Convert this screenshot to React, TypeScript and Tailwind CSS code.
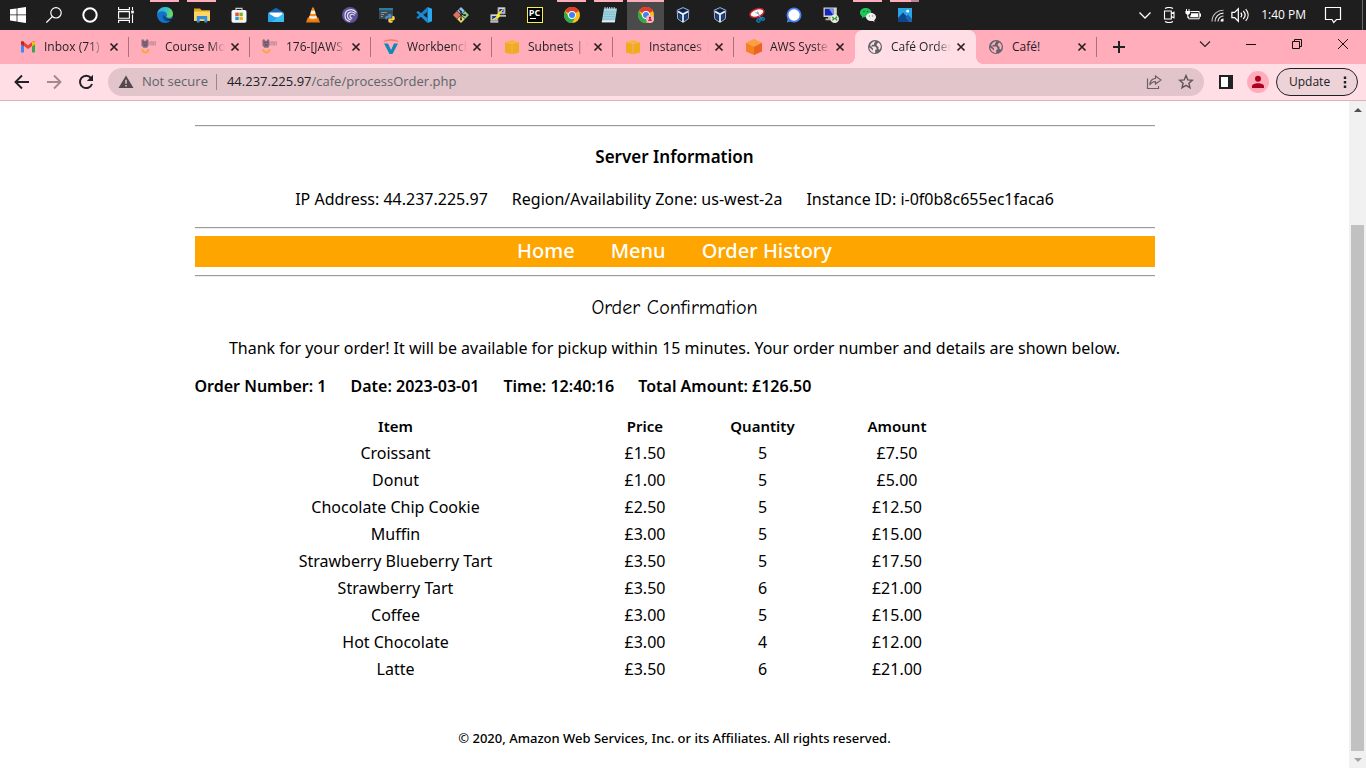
import React from "react";

type IconProps = { children: React.ReactNode; size?: string; box?: string };

function Svg({ children, size = "size-4", box = "0 0 16 16" }: IconProps) {
  return (
    <svg viewBox={box} className={`${size} shrink-0`} fill="none" aria-hidden="true">
      {children}
    </svg>
  );
}

/* ---------- Taskbar icons ---------- */

const Windows = () => (
  <Svg>
    <path fill="#fff" d="M0 2.3 6.6 1.4v6.1H0zM7.4 1.3 16 0v7.5H7.4zM0 8.3h6.6v6.2L0 13.6zM7.4 8.3H16V16l-8.6-1.3z" />
  </Svg>
);
const Search = () => (
  <Svg>
    <circle cx="10" cy="5.8" r="5.2" stroke="#fff" strokeWidth="1.2" />
    <path d="M6.3 9.6.3 15.6" stroke="#fff" strokeWidth="1.3" />
  </Svg>
);
const Cortana = () => (
  <Svg>
    <circle cx="8" cy="8" r="6.7" stroke="#fff" strokeWidth="2" />
  </Svg>
);
const TaskView = () => (
  <Svg>
    <path d="M.6 0v2.6h10.8V0M.6 16v-2.6h10.8V16M.6 4.6h10.8v6.6H.6zM14.5 0v3M14.5 7.5V16" stroke="#fff" strokeWidth="1.1" />
    <path d="M13.2 3.6h2.6v2.8h-2.6z" fill="#fff" />
  </Svg>
);
const Edge = () => (
  <Svg>
    <defs>
      <linearGradient id="edgeTop" x1="0" y1="0" x2="1" y2="0.4">
        <stop offset="0" stopColor="#2ba7e0" />
        <stop offset="0.6" stopColor="#35c1c8" />
        <stop offset="1" stopColor="#6bdc5a" />
      </linearGradient>
    </defs>
    <circle cx="8" cy="8" r="8" fill="#1671c9" />
    <path d="M.1 7.2C.8 2.8 4.2 0 8.2 0 12.800 0 16 3.200 16 6.700c0 2.400-1.800 4-4.200 4-1.600 0-2.600-.6-2.400-1.200.8-.8.8-1.600.6-2.300C9.500 5.400 7.800 4.300 5.600 4.300 3 4.300.8 5.500.1 7.200z" fill="url(#edgeTop)" />
    <path d="M6 7.500c-1.400 3.600 1.600 7.500 6.600 6.900 1-.2 1.800-.7 2.200-1.100-2.400.7-6.500-.4-6-3.800C7.500 9.300 6.300 8.500 6 7.500z" fill="#0c4a97" />
    <path d="M9.400 9.500c-.5 2.400 2.900 3.600 6 2.100l.6 1.200-1.200.6c-2.600.9-6.400-.6-5.400-3.900z" fill="#1e1e1e" />
  </Svg>
);
const Explorer = () => (
  <Svg>
    <path d="M0 1.500h6l1.500 1.700H16V14H0z" fill="#e8a820" />
    <path d="M0 4.500h16v9.300H0z" fill="#fcd667" />
    <path d="M2.800 9h10.400v6.600h-2.800v-3.400H5.600v3.400H2.800z" fill="#2f8fdc" />
  </Svg>
);
const Store = () => (
  <Svg>
    <path d="M5 3.500V1.400h6v2.100" stroke="#c9cdd2" strokeWidth="1.200" />
    <rect x=".5" y="3" width="15" height="12.800" rx="1.800" fill="#f4f6f8" />
    <path d="M4.300 5.600h3.400V9H4.300z" fill="#e9502a" />
    <path d="M8.400 5.600h3.400V9H8.400z" fill="#7cb52b" />
    <path d="M4.300 9.700h3.400v3.400H4.300z" fill="#1f9be0" />
    <path d="M8.400 9.700h3.400v3.400H8.400z" fill="#f6b50e" />
  </Svg>
);
const Mail = () => (
  <Svg>
    <path d="M0 5.800 8 .800l8 5V15H0z" fill="#1566b3" />
    <path d="M1.500 5.500h13v5h-13z" fill="#fff" />
    <path d="M0 6v9h16L8 10.700z" fill="#28a4ea" />
    <path d="M16 6v9H3.500z" fill="#3cbcf5" />
  </Svg>
);
const Vlc = () => (
  <Svg>
    <path d="m2.700 10.500-1.700 5h14l-1.700-5z" fill="#e87a10" />
    <path d="M7.200.5h1.600l3.700 12c-2 1.300-7 1.300-9 0z" fill="#f58a18" />
    <path d="m6.300 3.500-.9 2.900c1.600.7 3.600.7 5.200 0l-.9-2.900c-1 .4-2.400.4-3.400 0zM4.700 8.700l-.7 2.200c2.300 1.100 5.700 1.100 8 0l-.7-2.200c-1.900.8-4.700.8-6.600 0z" fill="#f3efe9" />
  </Svg>
);
const Torrent = () => (
  <Svg>
    <circle cx="8" cy="8" r="8" fill="#5d5298" />
    <path d="M14.500 5.500C11 1 3 2 3 8.500c0 3 2 5.500 5 6M13.500 7C11 3.800 5.500 4.500 5.500 8.700c0 2 1.500 3.800 3.800 4.300M12.500 8.500c-1.300-2-4.500-1.400-4.500.5 0 1.300 1 2.200 2.300 2.400" stroke="#e3e0f3" strokeWidth="1.200" />
  </Svg>
);
const PyIdle = () => (
  <Svg>
    <path d="M0 1h14v11H0z" fill="#3b4a54" />
    <path d="M0 1h14v2.200H0z" fill="#2c7aa8" />
    <path d="M2 5.500h6M2 7.500h3M2 9.500h2" stroke="#8395a0" />
    <path d="M8.500 8.500c0-1.300.8-1.600 2-1.600s2 .4 2 1.500v2.400H9.400c-1 0-1.500.7-1.500 1.800-1.200 0-1.700-.6-1.700-1.900s.6-1.800 1.700-1.800h2.600" fill="#4a8ac4" />
    <path d="M13.300 8.800c1.700 0 2.500.8 2.500 2.400s-.8 2.200-1.900 2.200h-2.200v.5h2.100c0 1.300-.8 1.900-2.200 1.900s-2.300-.6-2.300-1.800v-1.200c0-.8.500-1.300 1.300-1.300h1.800c.6 0 .9-.4.9-1z" fill="#f8d24a" />
  </Svg>
);
const VsCode = () => (
  <Svg>
    <path d="m11.500 0 4.500 1.800v12.400L11.500 16z" fill="#29a8f0" />
    <path d="M11.500 0v4.700L2.200 12 .2 10.700z" fill="#1583cf" />
    <path d="M11.500 16v-4.700L2.200 4 .2 5.300z" fill="#1b8edb" />
  </Svg>
);
const Git = () => (
  <Svg>
    <path d="m8 0 3.800 3.800L8 7.600 4.200 3.800z" fill="#8ec3f0" />
    <path d="M3.900 4.100 7.800 8l-3.900 3.900L0 8z" fill="#e0705f" />
    <path d="M12.100 4.100 16 8l-3.900 3.900L8.200 8z" fill="#86cc84" />
    <path d="m8 8.400 3.800 3.800L8 16l-3.800-3.800z" fill="#f3d776" />
    <path d="M6 2.500 8 5v8M8 6.500l3.500 2" stroke="#222" strokeWidth="1.100" />
    <path d="M7.100 3.800h1.800v1.800H7.100zM7.100 11.500h1.800v1.800H7.100zM11 7.300h1.800v1.800H11z" fill="#222" />
  </Svg>
);
const Putty = () => (
  <Svg>
    <path d="M8 .5h7v6.300H8zM.8 7.500h7v6.300h-7z" fill="#d6d6d6" stroke="#999" />
    <path d="M9.400 2h4.200v3.300H9.400zM2.200 9h4.200v3.300H2.200z" fill="#1b33a8" />
    <path d="M8 8h8v1.800H8zM.3 14h8v1.800h-8z" fill="#b8b8b8" />
    <path d="M13 2.500 7.500 7v2.300L3 12.500 9.300 10V7.300z" fill="#ffee22" stroke="#ffee22" strokeWidth=".8" />
  </Svg>
);
const PyCharm = () => (
  <span className="flex size-4 flex-col items-center border border-[#f5f04a] bg-black font-['Open_Sans',sans-serif] text-[9px] leading-[9px] font-bold text-white">
    PC
    <span className="mt-px mr-1 h-px w-1.5 bg-white" />
  </span>
);
const Chrome = ({ badge = false }: { badge?: boolean }) => (
  <Svg>
    <circle cx="8" cy="8" r="8" fill="#fbc116" />
    <path d="M8 8 1.070 4A8 8 0 0 1 14.930 4z" fill="#e33b2e" />
    <path d="M8 0a8 8 0 0 1 6.930 4H8z" fill="#e33b2e" />
    <path d="M1.070 4A8 8 0 0 0 8 16l3.460-6L8 8l-3.500 2z" fill="#2da94f" />
    <circle cx="8" cy="8" r="3.900" fill="#fff" />
    <circle cx="8" cy="8" r="3" fill="#3f83f1" />
    {badge && (
      <>
        <circle cx="12" cy="12" r="4" fill="#ffb3c0" />
        <circle cx="12" cy="10.800" r="1.100" fill="#b00020" />
        <path d="M10 13.700c0-2 4-2 4 0z" fill="#b00020" />
      </>
    )}
  </Svg>
);
const Notepad = () => (
  <Svg>
    <path d="M3 1.500h13l-2.200 13.700H.8z" fill="#9fd5e2" />
    <path d="M.8 15.200h13l.3-1.700H1z" fill="#e9eef0" />
    <path d="M3.300 5h11M3 7.300h11M2.600 9.600h11M2.300 12h11" stroke="#78b4c4" strokeWidth=".7" />
    <path d="M4 0v2.500M6.300 0v2.500M8.600 0v2.500M10.900 0v2.500M13.200 0v2.500" stroke="#d6dde0" strokeWidth=".9" />
  </Svg>
);
const VBox = () => (
  <Svg>
    <path d="m8 .6 5.800 2.600-.5 8.600L8 15.500l-5.300-3.700-.5-8.600z" fill="#16325f" stroke="#9fb4d2" />
    <path d="M8 1.800 11.500 3.200 8 4.800 4.500 3.200z" fill="#0d1d38" />
    <path d="M3 4.500 8 7.300l5-2.800M8 7.500V15" stroke="#f0f5fc" strokeWidth="1.700" />
    <path d="m4 7.300 2.300 1.300v3.400L4.500 10.700zM12 7.300 9.700 8.600v3.400l1.800-1.300z" fill="#1f4a8a" />
  </Svg>
);
const Snip = () => (
  <Svg>
    <ellipse cx="8" cy="6" rx="7.200" ry="4" fill="#fafafa" stroke="#c8232b" strokeWidth="1.500" transform="rotate(-18 8 6)" />
    <path d="M6.500 5.500 9 6.500M8.500 4.500l3.500 8" stroke="#8b99a8" />
    <circle cx="9.500" cy="13.500" r="1.600" stroke="#1581c4" strokeWidth="1.400" />
    <circle cx="13.900" cy="12" r="1.400" stroke="#1581c4" strokeWidth="1.400" />
    <path d="m10.500 12 3.500-2" stroke="#1581c4" strokeWidth="1.400" />
  </Svg>
);
const Signal = () => (
  <Svg>
    <circle cx="8" cy="8" r="7.500" fill="#4a7ff0" />
    <path d="m.8 15.500 1-4 3 3z" fill="#4a7ff0" />
    <circle cx="8" cy="8" r="5.700" fill="#fff" />
  </Svg>
);
const Remote = () => (
  <Svg>
    <path d="M.5.500h13.300V10H.5z" fill="#d9d5c8" />
    <path d="M1.800 1.700h8.700v6.800H1.800z" fill="#1228b8" />
    <path d="M6 1.700h4.500v6.800z" fill="#7d93ee" />
    <path d="M5 10h4v1.600H5zM2.500 11.600h7v1.600h-7z" fill="#b9b5a8" />
    <circle cx="11.700" cy="11.700" r="4.300" fill="#e8e8e0" />
    <path d="m9.300 10 1.800 1.700-1.800 1.700M14.100 9.800l-1.800 1.700 1.800 1.700" stroke="#2a9a30" strokeWidth="1.300" />
  </Svg>
);
const WeChat = () => (
  <Svg>
    <path d="M5.700 1c3.200 0 5.700 2 5.700 4.700S9 10.300 5.700 10.300c-.6 0-1.200-.1-1.700-.2L1.700 11.200l.5-1.900C.8 8.500 0 7.200 0 5.700 0 3 2.500 1 5.700 1z" fill="#1fc65b" />
    <path d="M11 6c2.800 0 5 1.800 5 4.100 0 1.300-.7 2.400-1.800 3.100l.4 1.600-1.900-.9c-.5.200-1.100.2-1.700.2-2.800 0-5-1.700-5-4S8.200 6 11 6z" fill="#f0f0f0" />
    <circle cx="4" cy="4.500" r=".8" fill="#0d6b2d" />
    <circle cx="7.500" cy="4.500" r=".8" fill="#0d6b2d" />
    <circle cx="9.400" cy="9" r=".7" fill="#888" />
    <circle cx="12.700" cy="9" r=".7" fill="#888" />
  </Svg>
);
const Photos = () => (
  <Svg>
    <path d="M1 1h14v14H1z" fill="#2ba3e8" />
    <path d="m1 11 5-5.500L15 15H1z" fill="#0f4788" />
    <path d="m8.500 10.500 2.500-3 4 4.500v3h-3z" fill="#1b64b0" />
    <circle cx="10.700" cy="4.200" r="1.400" fill="#fff" />
  </Svg>
);

const pinned: { name: string; icon: React.ReactNode; mark?: "on" | "active" | "group" }[] = [
  { name: "Microsoft Edge", icon: <Edge />, mark: "on" },
  { name: "File Explorer", icon: <Explorer />, mark: "on" },
  { name: "Microsoft Store", icon: <Store /> },
  { name: "Mail", icon: <Mail /> },
  { name: "VLC", icon: <Vlc /> },
  { name: "BitTorrent", icon: <Torrent /> },
  { name: "Python IDLE", icon: <PyIdle /> },
  { name: "Visual Studio Code", icon: <VsCode /> },
  { name: "Git Bash", icon: <Git /> },
  { name: "PuTTY", icon: <Putty /> },
  { name: "PyCharm", icon: <PyCharm /> },
  { name: "Chrome", icon: <Chrome />, mark: "on" },
  { name: "Notepad", icon: <Notepad />, mark: "on" },
  { name: "Chrome profile", icon: <Chrome badge />, mark: "active" },
  { name: "VirtualBox", icon: <VBox /> },
  { name: "VirtualBox Manager", icon: <VBox /> },
  { name: "Snipping Tool", icon: <Snip /> },
  { name: "Signal", icon: <Signal /> },
  { name: "Remote Desktop", icon: <Remote /> },
  { name: "WeChat", icon: <WeChat />, mark: "on" },
  { name: "Photos", icon: <Photos />, mark: "group" },
];

const system = [
  { name: "Start", icon: <Windows /> },
  { name: "Search", icon: <Search /> },
  { name: "Cortana", icon: <Cortana /> },
  { name: "Task View", icon: <TaskView /> },
];

function Taskbar() {
  return (
    <div className="flex h-[30px] items-stretch bg-[#1e1e1e] text-white">
      <div className="mr-0.5 flex">
        {system.map((s) => (
          <button key={s.name} aria-label={s.name} className="flex w-9 items-center justify-center">
            {s.icon}
          </button>
        ))}
      </div>
      <div className="flex">
        {pinned.map((p) => (
          <button
            key={p.name}
            aria-label={p.name}
            className={`relative flex w-[37px] items-center justify-center ${p.mark === "active" ? "bg-[#4a4a4a]" : ""}`}
          >
            {p.mark === "active" && <span className="absolute inset-x-0 top-0 h-0.5 bg-[#ffacbb]" />}
            {p.mark === "on" && <span className="absolute inset-x-1 top-0 h-0.5 bg-[#ffacbb]" />}
            {p.mark === "group" && (
              <span className="absolute inset-x-1 top-0 h-0.5 border-r-8 border-[#b98690] bg-[#ffacbb]" />
            )}
            {p.icon}
          </button>
        ))}
      </div>
      <div className="ml-auto flex items-center">
        <button aria-label="Hidden icons" className="flex w-6 justify-center">
          <Svg><path d="m2.500 5.500 5.500 5.500 5.500-5.500" stroke="#fff" strokeWidth="1.300" /></Svg>
        </button>
        <button aria-label="Meet now" className="flex w-6 justify-center">
          <Svg>
            <path d="M4 1.500c2.500-1.300 5.500-1.300 8 0M4 14.500c2.500 1.300 5.500 1.300 8 0M3.500 4h6.800v8H3.500zM10.300 6.500l2.700-1.300v5.600l-2.700-1.300" stroke="#fff" strokeWidth="1.100" />
          </Svg>
        </button>
        <button aria-label="Battery" className="flex w-6 justify-center">
          <Svg>
            <path d="M5.500 4.500h8.700v7.300H3.700V9.500" stroke="#fff" />
            <path d="M6 6.300h7v4H5.300V8.500L6 7.700zM14.700 6.500H16v3.300h-1.300z" fill="#fff" />
            <path d="M1.500 2v2M4 2v2" stroke="#fff" />
            <path d="M.4 4h4.700v2.300L3.400 7.700H2.100L.4 6.300z" fill="#fff" />
            <path d="M2.800 7v4" stroke="#fff" />
          </Svg>
        </button>
        <button aria-label="Network" className="flex w-6 justify-center">
          <Svg>
            <path d="M3 14.500C3 8 8 3.200 14.500 3.200" stroke="#bbb" strokeWidth="1.100" />
            <path d="M6 14.500c0-4.700 3.800-8.400 8.500-8.400M9 14.500c0-3 2.500-5.500 5.500-5.500" stroke="#eee" strokeWidth="1.100" />
            <path d="M11.500 14.500c0-1.700 1.300-3 3-3v3z" fill="#fff" />
          </Svg>
        </button>
        <button aria-label="Volume" className="flex w-[22px] justify-center">
          <Svg size="size-[18px]">
            <path d="M.8 5.700h2.400L6.500 2.500v11L3.200 10.300H.8zM8.700 6c1 1.200 1 2.800 0 4M10.900 4.300c2 2.200 2 5.200 0 7.400M13.100 2.700c2.800 3.200 2.800 7.400 0 10.600" stroke="#fff" strokeWidth="1.100" />
          </Svg>
        </button>
        <time className="ml-2.5 font-['Open_Sans',sans-serif] text-xs">1:40 PM</time>
        <button aria-label="Notifications" className="ml-[17px] flex w-5 justify-center">
          <Svg size="size-[18px]" box="0 0 18 18">
            <path d="M1.500 1.500h15v12h-4L9.700 16.500 8 13.500H1.500z" stroke="#fff" strokeWidth="1.200" />
          </Svg>
        </button>
        <span className="mr-[3px] ml-[19px] h-[30px] w-px bg-[#6a6a6a]" />
      </div>
    </div>
  );
}

/* ---------- Tab icons ---------- */

const Gmail = () => (
  <Svg>
    <path d="M1 4v9.500h3V6.800L1.500 4.500z" fill="#4285f4" />
    <path d="M15 4v9.500h-3V6.800L14.500 4.500z" fill="#34a853" />
    <path d="M1 3.600C1 2.200 2.600 2 3.500 2.700L8 6.200v3.700L1 4.700z" fill="#ea4335" />
    <path d="M15 3.600c0-1.400-1.600-1.600-2.500-.9L8 6.200v3.700l4-3z" fill="#ea4335" />
    <path d="M12 3.100c1-1 3-.8 3 .8v1.300l-3 2.200z" fill="#fbbc04" />
    <path d="M1 3.700c0-1.600 2-1.800 3-.7v4L1 4.900z" fill="#c5221f" />
  </Svg>
);
const Canvas = () => (
  <Svg>
    <path d="M.5 1 2 0l1.200 1.800h1.600L6 0l1.300 1 .4 4.800L6.200 8.800H2.500L.5 6.500z" fill="#85697c" />
    <path d="M2.200 3.500h1.300M4.800 3.500h1.300M2.800 6h2.700" stroke="#57445a" />
    <path d="M9 2.500v4M9.500 3h1.500v3.500M12.500 2.500V6.500M14.300 2v4.500" stroke="#c78e9c" strokeWidth="1.300" />
    <path d="M1.200 10c.3 4.500 6 4.500 6.300 0" stroke="#fba63e" strokeWidth="2" />
  </Svg>
);
const Vocareum = () => (
  <Svg>
    <path d="M.8 2.500C4.500.5 11.500.5 15.200 2.500" stroke="#f4785a" strokeWidth="1.400" />
    <path d="M1 4.500h4L8 11l3-6.500h4L9.500 15h-3z" fill="#1089b8" />
  </Svg>
);
const YellowCube = () => (
  <Svg>
    <path d="M1.500 2.700 8 1.200l6.500 1.500L8 4.200z" fill="#f7b929" />
    <path d="M1 3.300 7.700 4.800v10.500L1 13.500zM15 3.300 8.300 4.800v10.500l6.700-1.800z" fill="#f0ac1c" />
  </Svg>
);
const OrangeCube = () => (
  <Svg>
    <path d="m8 0 8 3.700-8 4-8-4z" fill="#f9a13a" />
    <path d="m0 3.700 8 4V16l-8-3.600z" fill="#f58220" />
    <path d="m16 3.700-8 4V16l8-3.600z" fill="#ec6420" />
  </Svg>
);
const Globe = ({ hole }: { hole: string }) => (
  <Svg>
    <circle cx="8" cy="8" r="7" fill="#5f6368" />
    <path d="M8.500 2.200 7 4.500v1.300H5.200L4 7.500h4.200L9.500 9v1.800H8.200V14C5 14 2.300 11.500 2.300 8.200L6 11.500v-2L3 6.500C4 4 6 2.200 8.500 2.200zM11.500 3.500C13 4.500 13.800 6.300 13.800 8l-1 2.800-1.300-.8V8L9.700 6.500V5z" fill={hole} />
  </Svg>
);

const tabs = [
  { title: "Inbox (71)", icon: <Gmail /> },
  { title: "Course Mo", icon: <Canvas /> },
  { title: "176-[JAWS", icon: <Canvas /> },
  { title: "Workbench", icon: <Vocareum /> },
  { title: "Subnets | V", icon: <YellowCube /> },
  { title: "Instances |", icon: <YellowCube /> },
  { title: "AWS Syste", icon: <OrangeCube /> },
  { title: "Café Order", icon: <Globe hole="#ffdfe5" /> },
  { title: "Café!", icon: <Globe hole="#ffacbb" /> },
];
const ACTIVE = 7;

function TabStrip() {
  return (
    <div className="flex h-[34px] bg-[#ffacbb] pl-2 text-[#1f2023]">
      {tabs.map((t, i) => {
        const active = i === ACTIVE;
        return (
          <div
            key={t.title}
            className={`relative flex w-[121px] items-center pl-3 ${active ? "rounded-t-lg bg-[#ffdfe5]" : ""}`}
          >
            {active && (
              <>
                <span className="absolute bottom-0 -left-2 size-2 bg-[radial-gradient(circle_at_0_0,transparent_8px,#ffdfe5_8px)]" />
                <span className="absolute -right-2 bottom-0 size-2 bg-[radial-gradient(circle_at_100%_0,transparent_8px,#ffdfe5_8px)]" />
              </>
            )}
            {t.icon}
            <span className={`ml-2 w-[60px] text-xs whitespace-nowrap ${i < 8 ? "mask-r-from-75%" : ""}`}>{t.title}</span>
            <button aria-label={`Close ${t.title}`} className="ml-0.5">
              <Svg><path d="m4.500 4.500 7 7m0-7-7 7" stroke="#2a2023" strokeWidth="1.700" /></Svg>
            </button>
            {!active && i !== ACTIVE - 1 && <span className="ml-auto h-5 w-px bg-[#a8717c]" />}
          </div>
        );
      })}
      <button aria-label="New tab" className="ml-3.5 flex items-center">
        <Svg><path d="M8 2v12M2 8h12" stroke="#202124" strokeWidth="2" /></Svg>
      </button>
      <div className="ml-auto flex h-7">
        <button aria-label="Search tabs" className="flex w-[46px] items-center justify-center">
          <Svg><path d="m3 5.500 5 5 5-5" stroke="#222" strokeWidth="1.100" /></Svg>
        </button>
        <button aria-label="Minimize" className="flex w-[46px] items-center justify-center">
          <Svg><path d="M3 8.500h10" stroke="#111" /></Svg>
        </button>
        <button aria-label="Restore" className="flex w-[46px] items-center justify-center">
          <Svg><path d="M3.500 5.500h7v7h-7zM5.500 5.500v-2h7v7h-2" stroke="#111" /></Svg>
        </button>
        <button aria-label="Close window" className="flex w-[46px] items-center justify-center">
          <Svg><path d="m3 3 10 10M13 3 3 13" stroke="#111" /></Svg>
        </button>
      </div>
    </div>
  );
}

function Toolbar() {
  return (
    <div className="flex h-[37px] items-center border-b border-[#d5b6bd] bg-[#ffdfe5] pr-2 pl-3.5 text-[#202124]">
      <div className="flex gap-4">
        <button aria-label="Back"><Svg><path d="M15 8H2M8 1.500 1.500 8 8 14.500" stroke="#202124" strokeWidth="1.900" /></Svg></button>
        <button aria-label="Forward"><Svg><path d="M1 8h13M8 1.500 14.500 8 8 14.500" stroke="#a3898f" strokeWidth="1.900" /></Svg></button>
        <button aria-label="Reload">
          <Svg>
            <path d="M13 4A6.200 6.200 0 1 0 14 10" stroke="#202124" strokeWidth="2" />
            <path d="M15 .8V7H8.800z" fill="#202124" />
          </Svg>
        </button>
      </div>
      <div className="ml-3.5 flex h-7 flex-1 items-center rounded-full bg-[#e1c5ca] px-2.5 font-['Open_Sans',sans-serif] text-[13px] text-[#5f6368]">
        <Svg>
          <path d="M8 1.500 15.500 14H.5z" fill="#54494d" />
          <path d="M8 5.800v4M8 11v1.600" stroke="#e1c5ca" strokeWidth="1.500" />
        </Svg>
        <span className="ml-2">Not secure</span>
        <span className="mr-2.5 ml-2 h-4 w-px bg-[#9b868b]" />
        <div className="relative flex-1">
          <input aria-label="Address" className="w-full bg-transparent text-transparent outline-none" defaultValue="44.237.225.97/cafe/processOrder.php" />
          <span className="pointer-events-none absolute inset-0" aria-hidden="true">
            <span className="text-[#202124]">44.237.225.97</span>/cafe/processOrder.php
          </span>
        </div>
        <button aria-label="Share" className="mr-4">
          <Svg>
            <path d="M1.500 4.500v10h11v-2.500M9.500 2l5.500 4-5.500 4V7.700C6.500 7.700 5 8.800 3.700 11 4 7.500 6 4.800 9.500 4.400z" stroke="#6d6064" strokeWidth="1.200" />
          </Svg>
        </button>
        <button aria-label="Bookmark">
          <Svg><path d="m8 1.600 1.800 4.300 4.600.4-3.500 3 1.100 4.500L8 11.400l-4 2.400 1.100-4.500-3.500-3 4.600-.4z" stroke="#5f5357" strokeWidth="1.400" /></Svg>
        </button>
      </div>
      <button aria-label="Side panel" className="ml-3.5">
        <Svg><path d="M1 1h14v14H1z" fill="#202124" /><path d="M3 3h7v10H3z" fill="#fff" /></Svg>
      </button>
      <button aria-label="Profile" className="ml-[13px] flex size-[22px] items-center justify-center rounded-full bg-[#ffacbb]">
        <Svg><circle cx="8" cy="4.700" r="3" fill="#b00020" /><path d="M2 14v-1.700C2 8.200 14 8.200 14 12.300V14z" fill="#b00020" /></Svg>
      </button>
      <button className="ml-[7px] flex h-7 w-[82px] items-center justify-between rounded-full border border-[#202124] bg-[#edd2d8] pr-1 pl-3 font-['Open_Sans',sans-serif] text-xs">
        Update
        <Svg>
          <path d="M6.800 2.500h2.400v2.400H6.800zM6.800 7h2.400v2.400H6.800zM6.800 11.500h2.400v2.400H6.800z" fill="#202124" />
        </Svg>
      </button>
    </div>
  );
}

const server = ["IP Address: 44.237.225.97", "Region/Availability Zone: us-west-2a", "Instance ID: i-0f0b8c655ec1faca6"];
const summary = ["Order Number: 1", "Date: 2023-03-01", "Time: 12:40:16", "Total Amount: £126.50"];
const rows: [string, string, number, string][] = [
  ["Croissant", "£1.50", 5, "£7.50"],
  ["Donut", "£1.00", 5, "£5.00"],
  ["Chocolate Chip Cookie", "£2.50", 5, "£12.50"],
  ["Muffin", "£3.00", 5, "£15.00"],
  ["Strawberry Blueberry Tart", "£3.50", 5, "£17.50"],
  ["Strawberry Tart", "£3.50", 6, "£21.00"],
  ["Coffee", "£3.00", 5, "£15.00"],
  ["Hot Chocolate", "£3.00", 4, "£12.00"],
  ["Latte", "£3.50", 6, "£21.00"],
];

const Rule = () => <hr className="h-0.5 border-t border-b border-t-[#9a9a9a] border-b-[#eeeeee]" />;

function OrderPage() {
  return (
    <main className="mx-auto w-full max-w-[960px] pt-6 text-center font-['Noto_Sans',sans-serif] text-base leading-6 text-black">
      <Rule />
      <h2 className="mt-[18px] text-[17px] font-semibold">Server Information</h2>
      <p className="mt-[18px] flex justify-center gap-6">
        {server.map((s) => <span key={s}>{s}</span>)}
      </p>
      <div className="mt-4"><Rule /></div>
      <nav className="mt-[7px] mb-2 flex h-[31px] items-center justify-center gap-9 bg-[#ffa500] pb-0.5 text-xl font-medium text-white">
        <a href="#home">Home</a>
        <a href="#menu">Menu</a>
        <a href="#history">Order History</a>
      </nav>
      <Rule />
      <h2 className="mt-[19px] font-['Comic_Sans_MS','Comic_Neue',cursive] text-xl leading-6 font-medium">Order Confirmation</h2>
      <p className="mt-4">
        Thank for your order! It will be available for pickup within 15 minutes. Your order number and details are shown below.
      </p>
      <p className="mt-3.5 flex gap-6 font-semibold">
        {summary.map((s) => <span key={s}>{s}</span>)}
      </p>
      <table className="mt-3.5 w-4/5 table-fixed">
        <colgroup>
          <col className="w-[402px]" />
          <col className="w-[97px]" />
          <col className="w-[138px]" />
          <col />
        </colgroup>
        <thead>
          <tr className="h-[27px] text-[15px]">
            {["Item", "Price", "Quantity", "Amount"].map((h) => <th key={h} className="p-0 font-semibold">{h}</th>)}
          </tr>
        </thead>
        <tbody>
          {rows.map((r) => (
            <tr key={r[0]} className="h-[27px]">
              {r.map((c, i) => <td key={i} className="p-0">{c}</td>)}
            </tr>
          ))}
        </tbody>
      </table>
      <footer className="mt-11 text-[13px] leading-6 font-medium">
        © 2020, Amazon Web Services, Inc. or its Affiliates. All rights reserved.
      </footer>
    </main>
  );
}

export default function App() {
  return (
    <div className="flex min-h-screen flex-col bg-white font-['Open_Sans',sans-serif]">
      <Taskbar />
      <TabStrip />
      <Toolbar />
      <div className="flex flex-1">
        <div className="min-w-0 flex-1"><OrderPage /></div>
        <div className="flex w-[17px] flex-col items-center bg-[#f1f1f1]">
          <button aria-label="Scroll up" className="flex h-[17px] items-center"><Svg size="size-2" box="0 0 8 8"><path d="M0 6l4-4 4 4z" fill="#505050" /></Svg></button>
          <div className="mt-[107px] w-[13px] flex-1 bg-[#c1c1c1]" />
          <button aria-label="Scroll down" className="flex h-[17px] items-center"><Svg size="size-2" box="0 0 8 8"><path d="M0 2l4 4 4-4z" fill="#a3a3a3" /></Svg></button>
        </div>
      </div>
    </div>
  );
}
